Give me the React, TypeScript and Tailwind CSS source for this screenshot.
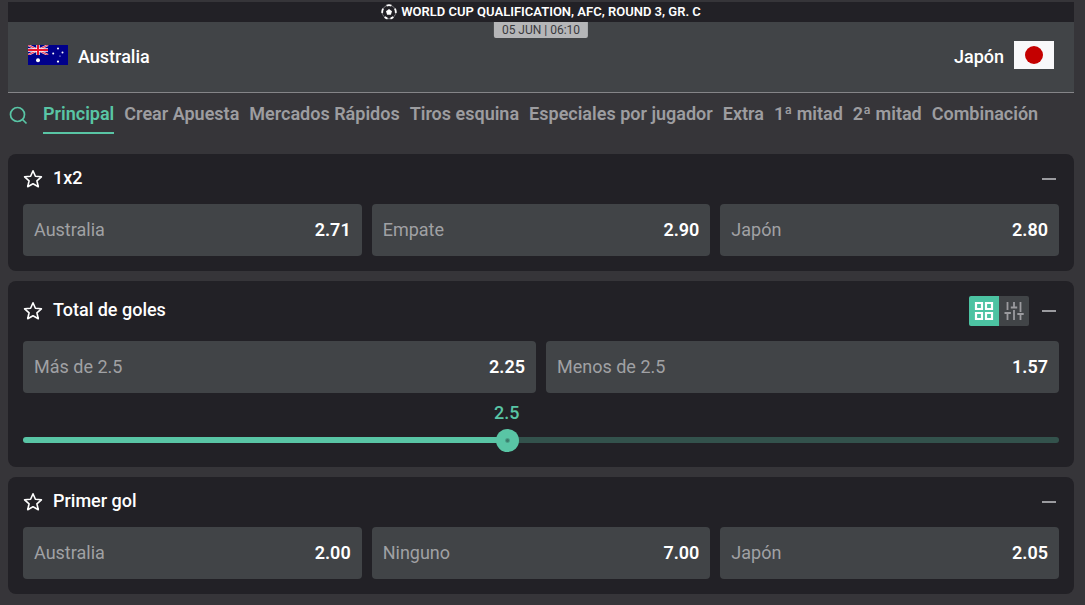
import { useState } from "react";

const tabs = [
  "Principal",
  "Crear Apuesta",
  "Mercados Rápidos",
  "Tiros esquina",
  "Especiales por jugador",
  "Extra",
  "1ª mitad",
  "2ª mitad",
  "Combinación",
];

type Pick = { name: string; odds: string };

const result: Pick[] = [
  { name: "Australia", odds: "2.71" },
  { name: "Empate", odds: "2.90" },
  { name: "Japón", odds: "2.80" },
];

const totals: Pick[] = [
  { name: "Más de 2.5", odds: "2.25" },
  { name: "Menos de 2.5", odds: "1.57" },
];

const firstGoal: Pick[] = [
  { name: "Australia", odds: "2.00" },
  { name: "Ninguno", odds: "7.00" },
  { name: "Japón", odds: "2.05" },
];

function BallIcon() {
  return (
    <svg className="h-4 w-4" viewBox="0 0 16 16" fill="none">
      <circle cx="8" cy="8" r="6.8" stroke="#77777b" strokeWidth="1" />
      <path
        d="M5.6 1.6A6.8 6.8 0 0 1 10.4 1.6M13.9 4.6A6.8 6.8 0 0 1 14.7 9M12.3 13A6.8 6.8 0 0 1 9.5 14.6M6.5 14.6A6.8 6.8 0 0 1 3.7 13M1.3 9A6.8 6.8 0 0 1 2.1 4.6"
        stroke="#fff"
        strokeWidth="1.8"
      />
      <path d="M8 5l3 2.200-1.100 3.500H6.100L5 7.200z" fill="#fff" />
    </svg>
  );
}

function AustraliaFlag() {
  return (
    <svg className="h-5 w-10" viewBox="0 0 40 20">
      <path d="M0 0h40v20H0z" fill="#00008b" />
      <path d="M0 0l20 10M20 0L0 10" stroke="#f4c4d0" strokeWidth="2.2" />
      <path d="M0 0l20 10M20 0L0 10" stroke="#e8112d" strokeWidth=".8" />
      <path d="M10 0v10M0 5h20" stroke="#fff" strokeWidth="3.4" />
      <path d="M10 0v10M0 5h20" stroke="#e8112d" strokeWidth="2" />
      <path d="M0 10h20V20H0z" fill="#00008b" />
      <g fill="#fff">
        <circle cx="10" cy="15.3" r="2" />
        <circle cx="30" cy="3.4" r="1" />
        <circle cx="25.2" cy="8.6" r="1" />
        <circle cx="34.5" cy="7.5" r="1" />
        <circle cx="32" cy="11" r=".6" />
        <circle cx="30" cy="16.6" r="1.1" />
      </g>
    </svg>
  );
}

function JapanFlag() {
  return (
    <svg className="h-7 w-10" viewBox="0 0 40 28">
      <path d="M0 0h40v28H0z" fill="#f8f8fa" />
      <circle cx="20" cy="14" r="9" fill="#c40000" />
    </svg>
  );
}

function StarIcon() {
  return (
    <svg className="h-5 w-5" viewBox="0 0 20 20" fill="none" stroke="#fff" strokeWidth="1.6" strokeLinejoin="round">
      <path d="M10 1.8l2.4 5.4 6 .6-4.5 4 1.4 5.9L10 14.8l-5.3 2.9 1.4-5.9-4.5-4 6-.6z" />
    </svg>
  );
}

function GridIcon() {
  return (
    <svg className="h-5 w-5" viewBox="0 0 20 20" fill="none" stroke="#fff" strokeWidth="2.2">
      <path d="M2 2h6v6H2zM12 2h6v6h-6zM2 12h6v6H2zM12 12h6v6h-6z" />
    </svg>
  );
}

function SlidersIcon() {
  return (
    <svg className="h-5 w-5" viewBox="0 0 20 20" fill="none" stroke="#9b9b9f" strokeWidth="1.8">
      <path d="M3.5 1v8M3.5 12v7M.5 12h6.4M10 1v5M10 9v10M6.8 6.500h6.400M16.500 1v10M16.500 13v6M13.300 13h6.400" />
    </svg>
  );
}

function Picks({ items }: { items: Pick[] }) {
  return (
    <div className="flex gap-2.5">
      {items.map((item) => (
        <button
          key={item.name}
          className="flex h-13 flex-1 items-center justify-between rounded bg-[#414447] px-[11px] text-lg hover:bg-[#4a4d50]"
        >
          <span className="text-[#a0a1a4]">{item.name}</span>
          <span className="font-semibold text-white">{item.odds}</span>
        </button>
      ))}
    </div>
  );
}

function Market({
  title,
  tools,
  children,
}: {
  title: string;
  tools?: React.ReactNode;
  children: React.ReactNode;
}) {
  return (
    <section className="rounded-lg bg-[#222126] px-[15px] pb-[15px]">
      <header className={`flex items-center ${tools ? "h-15" : "h-[50px]"}`}>
        <button aria-label="Favorito">
          <StarIcon />
        </button>
        <h2 className="ml-2.5 flex-1 pb-0.5 text-lg font-medium text-white">{title}</h2>
        {tools}
        <button aria-label="Contraer" className="ml-2.5 flex h-5 w-5 items-center justify-center">
          <span className="h-0.5 w-3.5 bg-[#9b9b9f]" />
        </button>
      </header>
      {children}
    </section>
  );
}

const MIN = 0.75;
const MAX = 4.5;

function LineSlider() {
  const [line, setLine] = useState(2.5);
  const ratio = (line - MIN) / (MAX - MIN);
  // half the thumb plus its share of the track left over
  const center = `calc(11px + (100% - 23px) * ${ratio})`;

  return (
    <div className="relative pt-11 pb-[9px]">
      <output
        htmlFor="line"
        className="absolute top-2 -translate-x-1/2 text-lg leading-6 font-medium text-[#59c5a5]"
        style={{ left: center }}
      >
        {line}
      </output>
      <input
        id="line"
        type="range"
        aria-label="Línea de goles"
        min={MIN}
        max={MAX}
        step={0.25}
        value={line}
        onChange={(e) => setLine(Number(e.target.value))}
        className="block h-1.5 w-full cursor-pointer appearance-none rounded-full [&::-webkit-slider-thumb]:h-[23px] [&::-webkit-slider-thumb]:w-[23px] [&::-webkit-slider-thumb]:appearance-none [&::-webkit-slider-thumb]:rounded-full [&::-webkit-slider-thumb]:bg-[radial-gradient(circle,#3b7d6c_1px,#59c5a5_3px)]"
        style={{
          backgroundImage: `linear-gradient(to right, #59c5a5 ${center}, #33524c ${center})`,
        }}
      />
    </div>
  );
}

export default function App() {
  const [active, setActive] = useState("Principal");

  return (
    <div className="min-h-screen bg-[#363539] pt-0.5 pr-[11px] pl-2 font-['Roboto',sans-serif]">
      {/* Match header */}
      <header>
        <div className="flex h-5 items-center justify-center gap-1 bg-[#222126] text-[13px] font-semibold text-white">
          <BallIcon />
          WORLD CUP QUALIFICATION, AFC, ROUND 3, GR. C
        </div>
        <div className="relative flex h-[71px] items-center justify-between border-b border-[#858588] bg-[#414447] px-5 pb-1 text-lg font-medium text-white">
          <div className="flex items-center gap-2.5">
            <AustraliaFlag />
            <span className="pt-1">Australia</span>
          </div>
          <time className="absolute top-0 left-1/2 h-4 -translate-x-1/2 rounded-b-xs bg-[#b5b6b8] px-2 text-xs leading-4 font-normal whitespace-nowrap text-[#3a3a3e]">
            05 JUN | 06:10
          </time>
          <div className="flex items-center gap-2.5">
            <span className="pt-1">Japón</span>
            <JapanFlag />
          </div>
        </div>
      </header>

      {/* Market tabs */}
      <nav className="flex h-[61px] items-start gap-[15px] whitespace-nowrap">
        <button aria-label="Buscar" className="mt-3">
          <svg className="h-5 w-5" viewBox="0 0 20 20" fill="none" stroke="#59c5a5" strokeWidth="1.7">
            <circle cx="9.5" cy="9.5" r="7" />
            <path d="M14.5 14.5l4 4" />
          </svg>
        </button>
        <div className="flex gap-2.5">
          {tabs.map((tab) => (
            <a
              key={tab}
              href="#"
              onClick={() => setActive(tab)}
              className={
                tab === active
                  ? "h-[41px] border-b-2 border-[#59c5a5] pt-2 text-lg leading-[26px] font-semibold text-[#59c5a5]"
                  : "h-[41px] pt-2 text-lg leading-[26px] font-semibold text-[#9d9da0]"
              }
            >
              {tab}
            </a>
          ))}
        </div>
      </nav>

      {/* Markets */}
      <main className="flex flex-col gap-2.5">
        <Market title="1x2">
          <Picks items={result} />
        </Market>
        <Market
          title="Total de goles"
          tools={
            <div className="flex overflow-hidden rounded-xs">
              <button aria-label="Cuadrícula" className="flex h-[30px] w-[30px] items-center justify-center bg-[#4cc3a2]">
                <GridIcon />
              </button>
              <button aria-label="Deslizador" className="flex h-[30px] w-[30px] items-center justify-center bg-[#414447]">
                <SlidersIcon />
              </button>
            </div>
          }
        >
          <Picks items={totals} />
          <LineSlider />
        </Market>
        <Market title="Primer gol">
          <Picks items={firstGoal} />
        </Market>
      </main>
    </div>
  );
}
